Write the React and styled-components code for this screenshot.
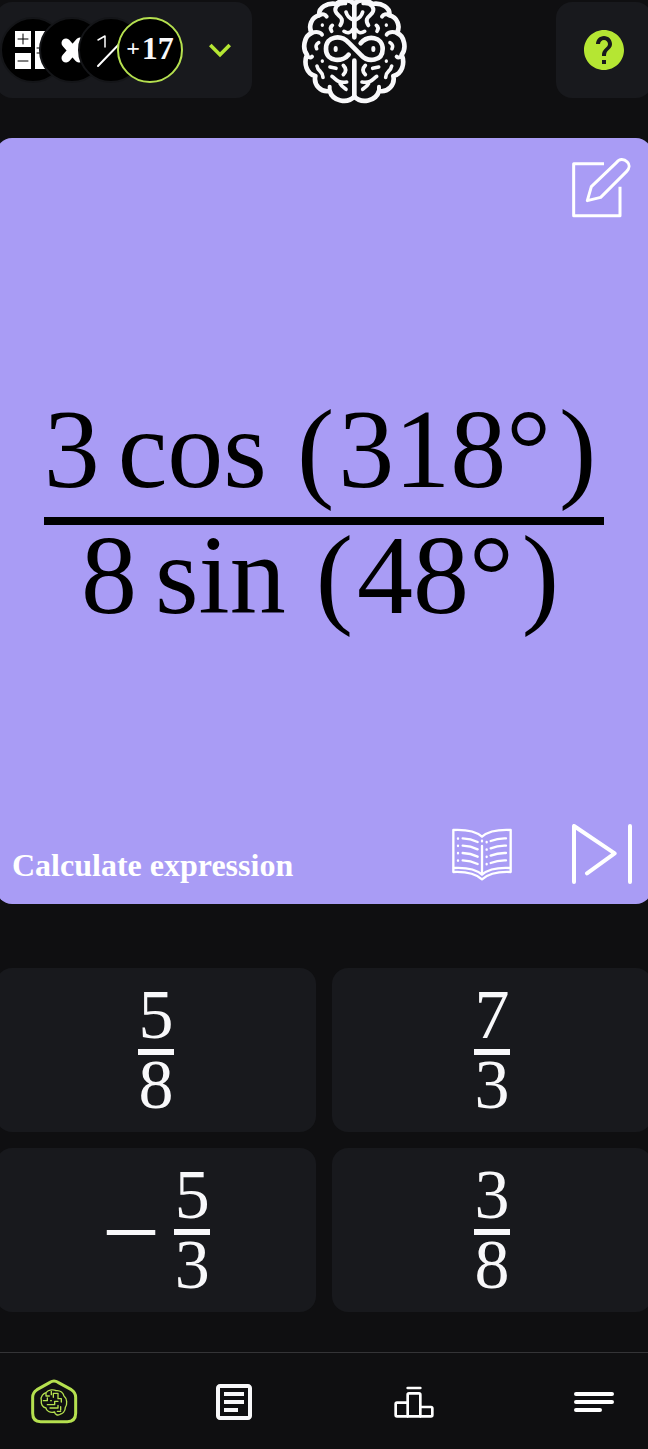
import React, { useState } from "react";
import styled, { createGlobalStyle } from "styled-components";
import { MdExpandMore, MdHelp, MdOutlineArticle } from "react-icons/md";

const GlobalStyle = createGlobalStyle`
  * {
    box-sizing: border-box;
  }

  body {
    margin: 0;
    background-color: #0f0f11;
    font-family: "Liberation Serif", "Times New Roman", serif;
  }

  button {
    font-family: inherit;
    color: inherit;
    border: none;
    padding: 0;
    cursor: pointer;
  }
`;

const Page = styled.div`
  display: flex;
  flex-direction: column;
  min-height: 100vh;
  overflow: hidden;
  color: #f8f8fa;
`;

const Header = styled.header`
  display: flex;
  align-items: center;
  gap: 48px;
  height: 96px;
  margin: 2px -4px 40px;
`;

const TopicButton = styled.button`
  display: flex;
  align-items: center;
  gap: 15px;
  height: 96px;
  padding: 0 10px 0 4px;
  border-radius: 16px;
  background-color: #18191d;
`;

const TopicStack = styled.span`
  display: flex;
`;

const Topic = styled.span`
  display: flex;
  align-items: center;
  justify-content: center;
  width: 66px;
  height: 66px;
  border: 2px solid ${({ $active }) => ($active ? "#b5e04f" : "#141518")};
  border-radius: 50%;
  background-color: #000000;

  & + & {
    margin-left: -27px;
  }
`;

const TopicCount = styled.span`
  display: flex;
  align-items: center;
  gap: 2px;
  padding-bottom: 4px;
  font-size: 32px;
  line-height: 32px;
  font-weight: bold;
`;

const Plus = styled.span`
  font-size: 24px;
`;

const HelpButton = styled.button`
  display: flex;
  align-items: center;
  justify-content: center;
  width: 96px;
  height: 96px;
  margin-left: auto;
  border-radius: 16px;
  background-color: #18191d;
`;

const Logo = styled.svg`
  flex-shrink: 0;
  width: 110px;
  height: 108px;
  fill: none;
  stroke: #f8f8fa;
  stroke-width: 14;
  stroke-linecap: round;
  stroke-linejoin: round;
`;

const Card = styled.main`
  flex: 1;
  display: grid;
  grid-template-rows: 1fr auto 1fr;
  margin: 0 -4px;
  padding: 20px;
  border-radius: 16px;
  background-color: #a99cf5;
`;

const CardTop = styled.div`
  display: flex;
  justify-content: flex-end;
  align-items: flex-start;
`;

const CardBottom = styled.div`
  display: flex;
  align-items: flex-end;
  gap: 60px;
  margin-left: -4px;
`;

const Prompt = styled.h1`
  flex: 1;
  margin: 0;
  font-size: 32px;
  line-height: 38px;
  font-weight: bold;
  color: #ffffff;
`;

const ToolButton = styled.button`
  width: 60px;
  height: 60px;
  background: none;
`;

const Icon = styled.svg`
  display: block;
  width: ${({ $size }) => $size}px;
  height: ${({ $size }) => $size}px;
  fill: none;
  stroke: ${({ $color }) => $color || "#ffffff"};
  stroke-width: ${({ $weight }) => $weight};
  stroke-linecap: round;
  stroke-linejoin: round;
`;

const Expression = styled.div`
  justify-self: center;
  color: #000000;
  font-size: 112px;
  line-height: 100px;
`;

const Term = styled.div`
  display: flex;
  justify-content: center;
  padding: 0 8px 18px 0;
  white-space: nowrap;

  & + & {
    border-top: 8px solid #000000;
  }
`;

const Func = styled.span`
  margin: 0 30px 0 18px;
`;

const Angle = styled.span`
  margin: 0 8px 0 4px;
`;

const Answers = styled.section`
  display: grid;
  grid-template-columns: 1fr 1fr;
  grid-auto-rows: 164px;
  gap: 16px;
  margin: 64px -4px 40px;
`;

const Answer = styled.button`
  display: flex;
  align-items: center;
  justify-content: center;
  gap: 14px;
  padding-top: 4px;
  border-radius: 16px;
  background-color: ${({ $selected }) => ($selected ? "#24262c" : "#18191d")};
  font-size: 70px;
  line-height: 60px;
`;

const Minus = styled.span`
  font-size: 104px;
`;

const Fraction = styled.span`
  display: flex;
  flex-direction: column;
  width: 36px;
`;

const Digit = styled.span`
  padding-bottom: 4px;

  & + & {
    border-top: 6px solid #f8f8fa;
  }
`;

const Nav = styled.nav`
  display: flex;
  align-items: center;
  justify-content: space-between;
  height: 97px;
  padding: 2px 30px 0;
  border-top: 1px solid #343437;
`;

const NavLink = styled.a`
  display: flex;
  color: #f8f8fa;
`;

const terms = [
  { factor: "3", func: "cos", angle: "318°" },
  { factor: "8", func: "sin", angle: "48°" },
];

const answers = [
  { top: "5", bottom: "8" },
  { top: "7", bottom: "3" },
  { top: "5", bottom: "3", negative: true },
  { top: "3", bottom: "8" },
];

// One side of the brain, drawn twice around the x = 193 axis
const BrainHalf = () => (
  <>
    <path d="M193 12 C180 -2 156 -4 140 12 C112 6 84 24 88 46 C64 52 54 78 65 99 C42 108 36 146 51 164 C40 190 50 222 76 228 C70 254 92 278 119 273 C128 304 172 312 193 290" />
    <path strokeWidth="12" d="M166 10 C140 8 130 26 140 40 C148 50 164 54 151 76" />
    <path strokeWidth="12" d="M88 46 C98 40 106 44 110 50" />
    <path strokeWidth="12" d="M65 99 C78 94 92 96 96 104" />
    <path strokeWidth="12" d="M51 168 C58 174 62 174 66 170" />
    <path strokeWidth="12" d="M119 273 V260" />
    <g strokeWidth="11">
      <path d="M168 36 Q172 52 190 60" />
      <path d="M162 94 C174 102 182 98 188 88" />
      <path d="M127 76 C119 82 121 88 125 94" />
      <path d="M86 128 C78 132 76 140 80 146" />
      <path d="M81 198 C84 216 98 212 99 232" />
      <path d="M120 201 L138 205" />
      <path d="M160 196 C170 206 168 216 160 224" />
      <path d="M126 229 C138 236 140 250 170 246 M150 250 C154 258 160 262 168 268" />
    </g>
    <path strokeWidth="10" d="M97 75 v1 M97 183 v1" />
  </>
);

const BrainLogo = () => (
  <Logo viewBox="30 -12 330 324" aria-hidden="true">
    <BrainHalf />
    <g transform="translate(386 0) scale(-1 1)">
      <BrainHalf />
    </g>
    <path d="M193 8 V112 M193 182 V288" />
    <path d="M176 164 C160 186 108 188 108 147 C108 106 154 104 176 128 L214 166 C234 188 278 184 278 147 C278 110 234 104 212 130" />
    <path strokeWidth="12" d="M137 144 V150 M250 144 V150" />
  </Logo>
);

const CalculatorIcon = () => (
  <Icon viewBox="0 0 40 40" $size={40} $weight={1}>
    <path fill="#fff" stroke="none" d="M2 1h16v16H2zM2 23h16v16H2zM22 1h18v38H22z" />
    <path stroke="#000" d="M5 9h10M10 4v10M5 31h10M24 18h8M24 23h8" />
  </Icon>
);

const TimesIcon = () => (
  <Icon viewBox="0 0 40 40" $size={40} $weight={9}>
    <path d="M14 13 L27 28 M28 12 L14 28" />
  </Icon>
);

const HalfIcon = () => (
  <Icon viewBox="0 0 40 40" $size={40} $weight={2}>
    <path strokeWidth="1.5" d="M7 10 L14 6 V17" />
    <path d="M7 36 L34 8" />
  </Icon>
);

const EditIcon = () => (
  <Icon viewBox="96 474 180 180" $size={60} $weight={9}>
    <path strokeLinecap="butt" d="M192 491 H101 V647 H240 V560" />
    <path d="M142 602 L154 560 L230 487 C238 476 252 476 262 486 C270 494 268 506 260 514 L182 592 Z" />
  </Icon>
);

const BookIcon = () => (
  <Icon viewBox="66 72 180 180" $size={60} $weight={7}>
    <path d="M156 110 C140 96 112 88 70 90 V216 C112 214 138 222 156 238 C174 222 200 214 242 216 V90 C200 88 172 96 156 110 Z" />
    <path d="M156 138 V222 M156 122 V124 M72 204 C110 202 138 208 156 224 C174 208 202 202 240 204" />
    <path d="M98 115 Q122 116 143 126 M98 137 Q122 138 143 148 M98 159 Q122 160 143 170 M98 181 Q122 182 143 192" />
    <path d="M182 123 Q204 114 228 115 M182 145 Q204 136 228 137 M182 167 Q204 158 228 159 M182 189 Q204 180 228 181" />
    <path d="M84 115v1M84 137v1M84 159v1M84 181v1M170 126v1M170 148v1M170 170v1M170 192v1" />
  </Icon>
);

const SkipIcon = () => (
  <Icon viewBox="426 74 180 180" $size={60} $weight={12}>
    <path d="M471 222 L554 162 L432 80 V248 M600 80 V248" />
  </Icon>
);

const HomeIcon = () => (
  <Icon viewBox="90 116 144 144" $size={48} $weight={9} $color="#b5e04f">
    <path d="M150 129 Q162 121 174 129 L214 151 Q227 159 227 174 V222 Q227 247 202 247 H122 Q98 247 98 222 V174 Q98 159 111 151 Z" />
    <g strokeWidth="4">
      <path d="M124 184 C120 170 132 162 138 160 C146 150 162 150 168 154 C182 152 190 162 192 170 C202 178 202 196 196 204 C196 218 186 224 182 224 C174 230 164 226 164 218 C150 222 138 214 138 206 C128 204 122 194 124 184 Z" />
      <path d="M138 162 V170 H148 M154 156 V166 M160 174 V162 H174 V178 H184 V188 M130 184 H142 V176 M142 196 H164 V186 H174 M150 206 H174 V198 M182 202 V212 M172 216 H182 M152 184 H154" />
    </g>
  </Icon>
);

const PodiumIcon = () => (
  <Icon viewBox="198 114 144 144" $size={48} $weight={8}>
    <path d="M251 144 H289 M251 230 V164 Q251 160 255 160 H285 Q289 160 289 164 V230 M251 188 H219 Q215 188 215 192 V225 Q215 229 219 229 H321 Q325 229 325 225 V205 Q325 201 321 201 H289" />
  </Icon>
);

const MenuIcon = () => (
  <Icon viewBox="738 114 144 144" $size={48} $weight={12}>
    <path d="M756 162 H864 M756 186 H864 M756 210 H828" />
  </Icon>
);

const App = () => {
  const [selected, setSelected] = useState(null);

  return (
    <Page>
      <GlobalStyle />
      <Header>
        <TopicButton type="button" aria-label="Choose topics">
          <TopicStack>
            <Topic>
              <CalculatorIcon />
            </Topic>
            <Topic>
              <TimesIcon />
            </Topic>
            <Topic>
              <HalfIcon />
            </Topic>
            <Topic $active>
              <TopicCount>
                <Plus>+</Plus>17
              </TopicCount>
            </Topic>
          </TopicStack>
          <MdExpandMore size={44} color="#b5e633" />
        </TopicButton>
        <BrainLogo />
        <HelpButton type="button" aria-label="Help">
          <MdHelp size={48} color="#b5e633" />
        </HelpButton>
      </Header>

      <Card>
        <CardTop>
          <ToolButton type="button" aria-label="Notes">
            <EditIcon />
          </ToolButton>
        </CardTop>
        <Expression>
          {terms.map((term) => (
            <Term key={term.func}>
              <span>{term.factor}</span>
              <Func>{term.func}</Func>
              <span>(</span>
              <Angle>{term.angle}</Angle>
              <span>)</span>
            </Term>
          ))}
        </Expression>
        <CardBottom>
          <Prompt>Calculate expression</Prompt>
          <ToolButton type="button" aria-label="Theory">
            <BookIcon />
          </ToolButton>
          <ToolButton type="button" aria-label="Skip">
            <SkipIcon />
          </ToolButton>
        </CardBottom>
      </Card>

      <Answers>
        {answers.map((answer, index) => (
          <Answer
            type="button"
            key={index}
            $selected={selected === index}
            onClick={() => setSelected(index)}
          >
            {answer.negative && <Minus>−</Minus>}
            <Fraction>
              <Digit>{answer.top}</Digit>
              <Digit>{answer.bottom}</Digit>
            </Fraction>
          </Answer>
        ))}
      </Answers>

      <Nav>
        <NavLink href="#home" aria-label="Home">
          <HomeIcon />
        </NavLink>
        <NavLink href="#articles" aria-label="Articles">
          <MdOutlineArticle size={48} />
        </NavLink>
        <NavLink href="#ranking" aria-label="Ranking">
          <PodiumIcon />
        </NavLink>
        <NavLink href="#menu" aria-label="Menu">
          <MenuIcon />
        </NavLink>
      </Nav>
    </Page>
  );
};

export default App;
